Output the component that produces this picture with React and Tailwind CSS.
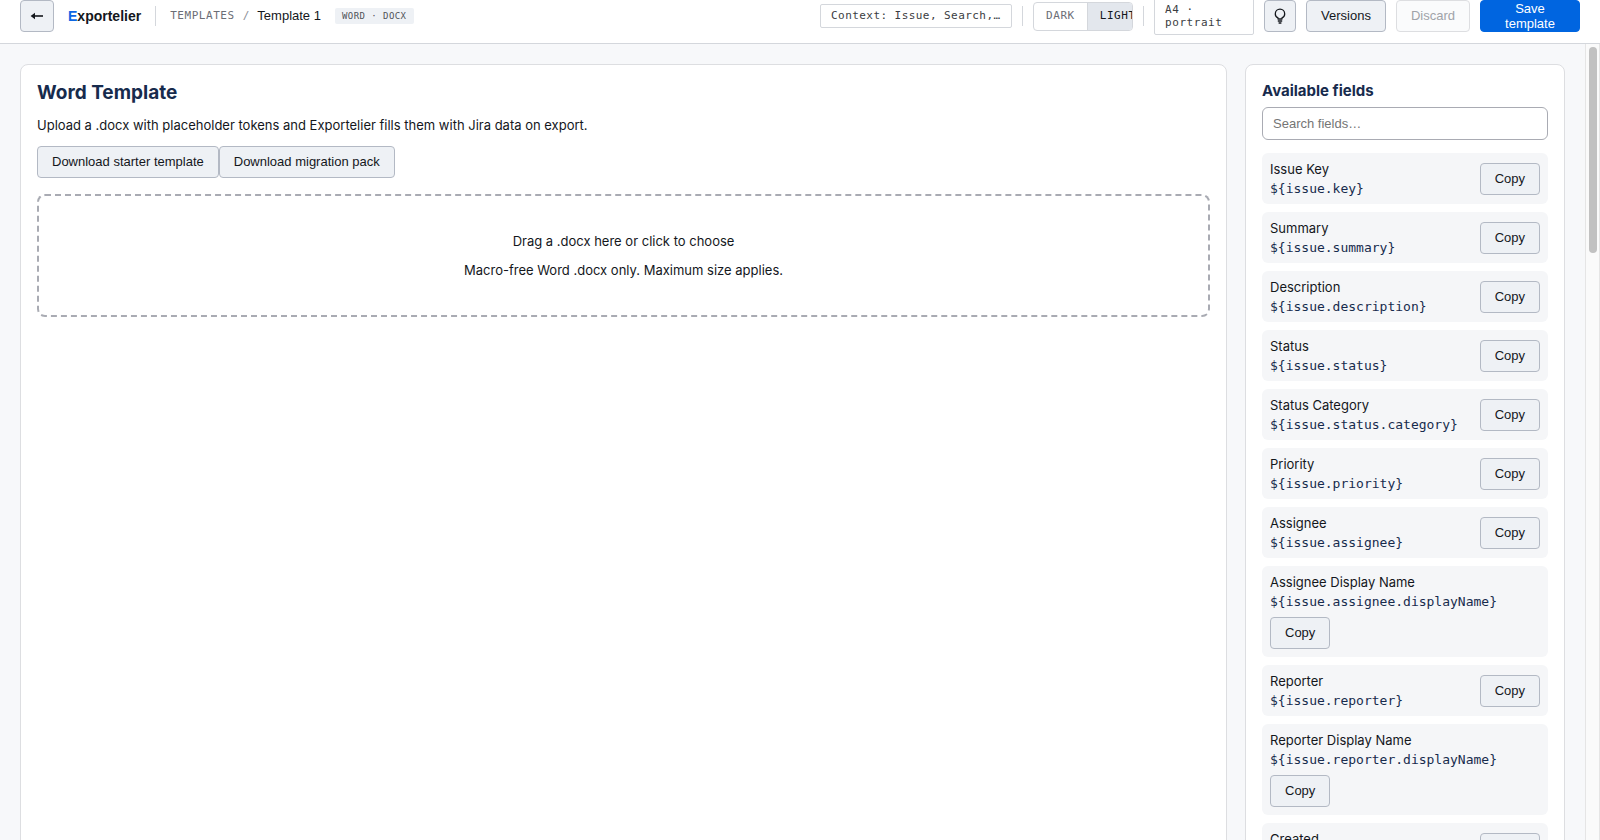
import { useState } from "react";

const fields = [
  ["Issue Key", "issue.key"],
  ["Summary", "issue.summary"],
  ["Description", "issue.description"],
  ["Status", "issue.status"],
  ["Status Category", "issue.status.category"],
  ["Priority", "issue.priority"],
  ["Assignee", "issue.assignee"],
  ["Assignee Display Name", "issue.assignee.displayName"],
  ["Reporter", "issue.reporter"],
  ["Reporter Display Name", "issue.reporter.displayName"],
  ["Created", "issue.created"],
];

const mono = "font-['DejaVu_Sans_Mono',monospace]";
const sans = "font-['Liberation_Sans',Arial,sans-serif]";

const variants = {
  default: "border-[#b3b9c4] bg-[#eef1f5] px-3.5 leading-4 text-[#14171c]",
  icon: "border-[#b3b9c4] bg-[#eef1f5] text-[#14171c]",
  disabled: "border-[#dddee1] bg-[#fafbfc] px-3.5 leading-4 text-[#a0a3a9]",
  primary: "w-[100px] border-[#0065e0] bg-[#0065e0] px-3.5 leading-[15px] text-white",
};

function Button({ variant = "default", className = "", children, ...props }) {
  return (
    <button
      type="button"
      className={`flex h-8 shrink-0 items-center justify-center rounded border text-[13px] ${sans} ${variants[variant]} ${className}`}
      {...props}
    >
      {children}
    </button>
  );
}

function Divider() {
  return <div className="h-5 w-px shrink-0 bg-[#d4d7dc]" />;
}

function ArrowLeft() {
  return (
    <svg width="14" height="10" viewBox="0 0 14 10" className="shrink-0" aria-hidden="true">
      <path d="M2 5H13" stroke="currentColor" strokeWidth="1.6" fill="none" />
      <path d="M5 1.8V8.2L0.6 5Z" fill="currentColor" />
    </svg>
  );
}

function Bulb() {
  return (
    <svg
      width="16"
      height="16"
      viewBox="0 0 16 16"
      fill="none"
      stroke="currentColor"
      strokeWidth="1.3"
      strokeLinejoin="round"
      className="shrink-0"
      aria-hidden="true"
    >
      <path d="M6 11V9.9C4.3 9.1 3.3 7.6 3.3 5.9A4.7 4.7 0 0 1 12.7 5.9C12.7 7.6 11.7 9.1 10 9.9V11Z" />
      <path d="M5.8 13H10.2M6.6 15H9.4" />
    </svg>
  );
}

function Header() {
  const [theme, setTheme] = useState("light");
  return (
    <header className="flex h-11 shrink-0 items-center justify-between overflow-hidden border-b border-[#d4d7dc] bg-white px-5 pb-[11px]">
      <div className="flex items-center gap-3.5">
        <Button variant="icon" className="w-[34px]" aria-label="Back">
          <ArrowLeft />
        </Button>
        <span className={`text-sm font-bold text-[#14171c] ${sans}`}>
          <span className="text-[#0c66e4]">E</span>xportelier
        </span>
        <Divider />
        <nav aria-label="Breadcrumb" className="flex items-center gap-2">
          <a href="#templates" className={`text-[11px] tracking-wider text-[#6b6e76] ${mono}`}>TEMPLATES</a>
          <span className={`text-[11px] text-[#8c8f97] ${mono}`}>/</span>
          <span className={`text-[13px] text-[#14171c] ${sans}`}>Template 1</span>
        </nav>
        <span className={`rounded-xs bg-[#eef1f5] px-[7px] text-[9px] leading-4 tracking-wider text-[#505258] ${mono}`}>
          WORD · DOCX
        </span>
      </div>
      <div className="flex items-center gap-2.5">
        <button
          type="button"
          className={`w-48 truncate rounded-xs border border-[#d4d7dc] bg-white px-2.5 text-left text-[11px] leading-[22px] tracking-[0.04em] text-[#3b3d42] ${mono}`}
        >
          Context: Issue, Search,…
        </button>
        <Divider />
        <div
          role="group"
          aria-label="Preview theme"
          className={`flex h-[29px] w-[100px] overflow-hidden rounded border border-[#d4d7dc] text-[11px] tracking-wider ${mono}`}
        >
          <button
            type="button"
            aria-pressed={theme === "dark"}
            onClick={() => setTheme("dark")}
            className="shrink-0 px-3 text-[#6b6e76] aria-pressed:bg-[#e3e7ed] aria-pressed:text-[#14171c]"
          >
            DARK
          </button>
          <button
            type="button"
            aria-pressed={theme === "light"}
            onClick={() => setTheme("light")}
            className="shrink-0 border-l border-[#d4d7dc] px-3 text-[#6b6e76] aria-pressed:bg-[#e3e7ed] aria-pressed:text-[#14171c]"
          >
            LIGHT
          </button>
        </div>
        <Divider />
        <button
          type="button"
          className={`-my-2 w-[100px] shrink-0 rounded-xs border border-[#d4d7dc] bg-white px-2.5 py-[5px] text-left text-[11px] leading-[13px] tracking-wider text-[#3b3d42] ${mono}`}
        >
          A4 · portrait
        </button>
        <Button variant="icon" className="w-8" aria-label="Tips">
          <Bulb />
        </Button>
        <Button>Versions</Button>
        <Button variant="disabled" disabled>
          Discard
        </Button>
        <Button variant="primary">Save template</Button>
      </div>
    </header>
  );
}

function Field({ label, token }) {
  return (
    <li className="flex flex-wrap items-center justify-between gap-2 rounded-md bg-[#f5f6f8] p-2">
      <div className="flex flex-col gap-1">
        <span className="leading-4">{label}</span>
        <code className={`leading-[15px] text-[#172b4d] ${mono}`}>{"${" + token + "}"}</code>
      </div>
      <Button aria-label={`Copy ${label}`}>Copy</Button>
    </li>
  );
}

export default function App() {
  return (
    <div className="flex h-screen flex-col overflow-hidden bg-[#f7f8fa] font-['Inter',sans-serif] text-[13px] leading-4 text-[#14171c]">
      <Header />
      <div className="flex min-h-0 flex-1">
        <main className="min-w-0 flex-1 overflow-y-auto p-5 [scrollbar-width:none]">
          <div className="flex gap-[18px]">
            <section className="flex min-w-0 flex-1 flex-col gap-[13px] rounded-lg border border-[#dddee1] bg-white p-4">
              <h1 className="text-[19px] font-bold leading-[23px] text-[#172b4d]">Word Template</h1>
              <p>Upload a .docx with placeholder tokens and Exportelier fills them with Jira data on export.</p>
              <div className="flex">
                <Button>Download starter template</Button>
                <Button>Download migration pack</Button>
              </div>
              <label className="mt-[3px] flex cursor-pointer flex-col gap-[13px] rounded-lg border-2 border-dashed border-[#a9abb3] px-6 py-[37px] text-center">
                <input type="file" accept=".docx" className="sr-only" />
                <span>Drag a .docx here or click to choose</span>
                <span>Macro-free Word .docx only. Maximum size applies.</span>
              </label>
            </section>
            <aside className="w-80 shrink-0 rounded-lg border border-[#dddee1] bg-white p-4">
              <h2 className="text-[15px] font-bold leading-5 text-[#172b4d]">Available fields</h2>
              <input
                type="search"
                aria-label="Search fields"
                placeholder="Search fields…"
                className={`mt-1.5 block h-[33px] w-full rounded-md border border-[#a9abb3] bg-white px-2.5 placeholder:text-[#757575] ${sans}`}
              />
              <ul className="mt-[13px] flex flex-col gap-2">
                {fields.map(([label, token]) => (
                  <Field key={token} label={label} token={token} />
                ))}
              </ul>
            </aside>
          </div>
        </main>
        <div aria-hidden="true" className="flex w-[15px] shrink-0 justify-center border-x border-[#e5e5e5] bg-[#fafafa] pt-[3px]">
          <div className="h-[26%] w-2 rounded-full bg-[#c1c1c1]" />
        </div>
      </div>
    </div>
  );
}
